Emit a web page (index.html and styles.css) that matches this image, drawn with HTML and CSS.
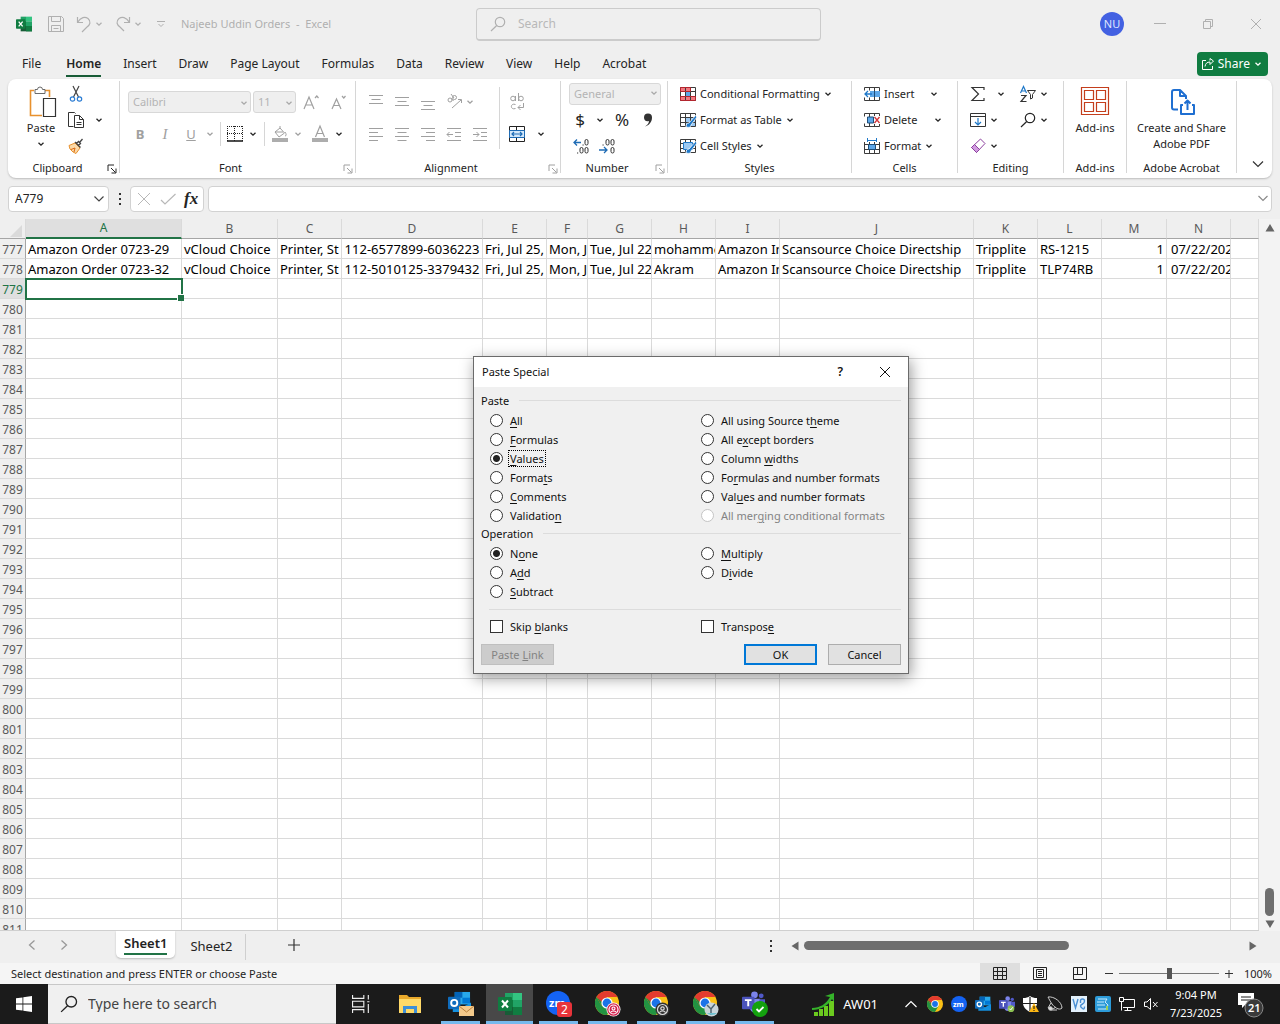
FILE: index.html
```html
<!DOCTYPE html>
<html lang="en">
<head>
<meta charset="utf-8">
<title>Najeeb Uddin Orders - Excel</title>
<link rel="stylesheet" href="styles.css">
</head>
<body>
<svg class="sprite" aria-hidden="true">
  <symbol id="chev" viewBox="0 0 8 8"><path d="M1.500 2.700 4 5.200l2.500-2.500" fill="none" stroke="currentColor" stroke-width="1.300"/></symbol>
  <symbol id="launch" viewBox="0 0 10 10"><path d="M1 7V1h6M4 4l4.500 4.500M9 4.500V9H4.500" fill="none" stroke="currentColor"/></symbol>
  <symbol id="search" viewBox="0 0 16 16"><circle cx="10" cy="6" r="4.700" fill="none" stroke="currentColor" stroke-width="1.200"/><path d="M6.700 9.500 1 15" stroke="currentColor" stroke-width="1.200"/></symbol>
  <symbol id="chrome" viewBox="0 0 24 24">
    <circle cx="12" cy="12" r="12" fill="#fbc116"/>
    <path d="M12 12 1.600 6A12 12 0 0 1 22.400 6H12z" fill="#e33b2e"/>
    <path d="M1.600 6A12 12 0 0 0 12 24l5.200-9L12 12 6.800 15z" fill="#229342"/>
    <path d="M1.600 6 6.800 15 12 12V6z" fill="#e33b2e"/><path d="M1.600 6 6.800 15 9 13z" fill="#229342"/>
    <circle cx="12" cy="12" r="5.600" fill="#fff"/><circle cx="12" cy="12" r="4.400" fill="#1a73e8"/>
  </symbol>
  <symbol id="excel" viewBox="0 0 24 24">
    <path d="M7 1h8v10H7z" fill="#21a366"/><path d="M15 1h9v7h-9z" fill="#33c481"/><path d="M7 8h8v8H7z" fill="#107c41"/><path d="M15 8h9v8h-9z" fill="#21a366"/><path d="M7 15h17v8H7z" fill="#185c37"/><path d="M15 15h9v8h-9z" fill="#107c41"/>
    <rect y="5" width="14" height="14" rx="1" fill="#107c41"/><path d="m4 8.500 6 7m0-7-6 7" stroke="#fff" stroke-width="2"/>
  </symbol>
  <symbol id="outlook" viewBox="0 0 24 24">
    <path d="M7 1h16v13H7z" fill="#28a8ea"/><path d="M7 1h8v6H7z" fill="#0364b8"/><path d="M15 7h8v6h-8z" fill="#0078d4"/><path d="M5 12l10 5 9-5v10H5z" fill="#1490df"/>
    <rect y="6" width="13" height="13" rx="1" fill="#0f6cbd"/><circle cx="6.500" cy="12.500" r="3.200" fill="none" stroke="#fff" stroke-width="2"/>
  </symbol>
  <symbol id="teams" viewBox="0 0 24 24">
    <circle cx="13" cy="4" r="3.500" fill="#7b83eb"/><circle cx="20" cy="5" r="2.500" fill="#5059c9"/><path d="M8 8h11v9a5.500 5.500 0 0 1-11 0z" fill="#7b83eb"/><path d="M18 8.500h6V15a3.500 3.500 0 0 1-6 2z" fill="#5059c9"/>
    <rect y="6" width="13" height="13" rx="1" fill="#4b53bc"/><path d="M3 9.500h7M6.500 9.500V16" stroke="#fff" stroke-width="2"/>
  </symbol>
  <symbol id="lines-l" viewBox="0 0 16 16"><path d="M1 2.500h14M1 6.500h9M1 10.500h14M1 14.500h9" stroke="currentColor"/></symbol>
  <symbol id="lines-c" viewBox="0 0 16 16"><path d="M1 2.500h14M3.500 6.500h9M1 10.500h14M3.500 14.500h9" stroke="currentColor"/></symbol>
  <symbol id="lines-r" viewBox="0 0 16 16"><path d="M1 2.500h14M6 6.500h9M1 10.500h14M6 14.500h9" stroke="currentColor"/></symbol>
  <symbol id="lines-3" viewBox="0 0 16 16"><path d="M1 3.500h14M3.500 7.500h9M1 11.500h14" stroke="currentColor"/></symbol>
  <symbol id="table" viewBox="0 0 16 16"><path d="M.5 1.500h15v13H.5zM.5 5.500h15M.5 10.500h15M5.500 1.500v13M10.500 1.500v13" fill="none" stroke="#3b3b3b"/></symbol>
</svg>

<header class="titlebar">
  <div class="quick">
    <svg class="i16" viewBox="0 0 24 24"><use href="#excel"/></svg>
    <button class="plain" aria-label="Save"><svg class="i16" viewBox="0 0 16 16" fill="none" stroke="currentColor"><path d="M.5.500h13l2 2v13H.5zM3.500.500v5h9v-5M3.500 15.500v-6h9v6M5.500 12.500h5"/></svg></button>
    <button class="plain split" aria-label="Undo"><svg class="i16" viewBox="0 0 16 16" fill="none" stroke="currentColor" stroke-width="1.200"><path d="M1.500 1v5.500H7M1.500 6.500C5 1 9 .5 12 2.500c3.500 3 2 6.500-1 8.500l-5 5"/></svg><svg class="i8"><use href="#chev"/></svg></button>
    <button class="plain split" aria-label="Redo"><svg class="i16" viewBox="0 0 16 16" fill="none" stroke="currentColor" stroke-width="1.200"><path d="M14.500 1v5.500H9M14.500 6.500C11 1 7 .5 4 2.500c-3.500 3-2 6.500 1 8.500l4 4"/></svg><svg class="i8"><use href="#chev"/></svg></button>
    <button class="plain custom" aria-label="Customize toolbar"><svg class="i10" viewBox="0 0 10 10" fill="none" stroke="currentColor"><path d="M1 2.500h8M2.500 5 5 7.500 7.500 5"/></svg></button>
    <h1>Najeeb Uddin Orders&nbsp; -&nbsp; Excel</h1>
  </div>
  <label class="searchbox"><svg class="i16"><use href="#search"/></svg><input type="text" placeholder="Search" aria-label="Search"></label>
  <div class="winctl">
    <button class="avatar">NU</button>
    <button class="plain" aria-label="Minimize"><svg class="i12" viewBox="0 0 12 12" stroke="currentColor"><path d="M0 5.500h12"/></svg></button>
    <button class="plain" aria-label="Restore"><svg class="i12" viewBox="0 0 12 12" fill="none" stroke="currentColor"><path d="M1.500 3.500h7v7h-7zM3.500 3V1.500h7v7H9"/></svg></button>
    <button class="plain" aria-label="Close"><svg class="i12" viewBox="0 0 12 12" stroke="currentColor"><path d="m1 1 10 10M11 1 1 11"/></svg></button>
  </div>
</header>

<nav class="tabs">
  <a href="#file" class="file">File</a><a href="#home" class="on">Home</a><a href="#insert">Insert</a><a href="#draw">Draw</a><a href="#layout">Page Layout</a><a href="#formulas">Formulas</a><a href="#data">Data</a><a href="#review">Review</a><a href="#view">View</a><a href="#help">Help</a><a href="#acrobat">Acrobat</a>
  <button class="share"><svg class="i12" viewBox="0 0 12 12" fill="none" stroke="currentColor"><path d="M4 2.500H.5v9h10V8M3 8.500C3.500 5.500 5 4 8 4V6.500L11.500 3 8 .5V2.500"/></svg>Share<svg class="i8"><use href="#chev"/></svg></button>
</nav>

<section class="ribbon">
  <div class="group g-clip">
    <div class="body">
      <button class="big"><svg width="28" height="32" viewBox="-2 -1 28 32" fill="none"><path d="M5 4.500H1.500v25H13M16 4.500h4.500V11" stroke="#e8912d" stroke-width="1.600"/><path d="M6 7.500v-4h2.500a2.500 2.500 0 0 1 5 0H16v4z" stroke="#6a6a6a" fill="#fff"/><path d="M14.500 12.500h12v18h-12z" stroke="#333" fill="#fff" stroke-width="1.200"/></svg>Paste<svg class="i8"><use href="#chev"/></svg></button>
      <div class="stack">
        <button class="row" aria-label="Cut"><svg class="i16" viewBox="0 0 16 16" fill="none"><path d="m5 0 5.500 11M11 0 5.500 11" stroke="#444" stroke-width="1.200"/><circle cx="4.500" cy="13" r="2.200" stroke="#2b7cd3" stroke-width="1.200"/><circle cx="11.500" cy="13" r="2.200" stroke="#2b7cd3" stroke-width="1.200"/></svg></button>
        <button class="row" aria-label="Copy"><svg class="i16" viewBox="0 0 16 16" fill="none" stroke="#333"><path d="M5.500 14.500h-5v-14h6l1 1M6.500 3.500h5l4 4v8h-9zM11.500 3.500v4h4M8.500 10.500h5M8.500 12.500h5"/></svg><svg class="i8"><use href="#chev"/></svg></button>
        <button class="row" aria-label="Format Painter"><svg class="i16" viewBox="0 0 16 16"><path d="M1 7.500 7 5l5 5-4 5.500-3-1.500-3-3z" fill="#fbd9a8" stroke="#e8912d"/><path d="M3 11.500 7 10l-1 4" fill="none" stroke="#d9660f"/><path d="m7 4 5.500 5.500M8.500 5.500l2-2 2 2-2 2zM11.500 4.500l3-3.500" stroke="#444" stroke-width="1.300" fill="#fff"/></svg></button>
      </div>
    </div>
    <footer>Clipboard<button class="launch" aria-label="Clipboard settings"><svg class="i10"><use href="#launch"/></svg></button></footer>
  </div>

  <div class="group g-font">
    <div class="body two">
      <div class="line">
        <span class="combo w-font"><select disabled aria-label="Font"><option>Calibri</option></select><svg class="i8"><use href="#chev"/></svg></span>
        <span class="combo w-size"><select disabled aria-label="Font size"><option>11</option></select><svg class="i8"><use href="#chev"/></svg></span>
        <button class="plain dim grow" aria-label="Increase font size"><svg class="i16" viewBox="0 0 16 16" fill="none" stroke="currentColor" stroke-width="1.200"><path d="M1 15 6 3l5 12M3 11h6M12 4l1.800-2L15.500 4"/></svg></button>
        <button class="plain dim grow" aria-label="Decrease font size"><svg class="i16" viewBox="0 0 16 16" fill="none" stroke="currentColor" stroke-width="1.200"><path d="m2 15 4.500-10L11 15M4 11.500h5M12 2l1.800 2L15.500 2"/></svg></button>
      </div>
      <div class="fontgrid">
        <button class="plain dim"><b>B</b></button><button class="plain dim"><i class="serif">I</i></button><button class="plain dim"><u>U</u></button><svg class="i8 dim"><use href="#chev"/></svg><span class="bar"></span>
        <button class="plain" aria-label="Borders"><svg class="i16" viewBox="0 0 16 16" stroke="#222"><path d="M.5 0v15M7.500 0v15M15.500 0v15M0 .5h16M0 7.500h16" stroke-dasharray="1 1"/><path d="M0 15h16" stroke-width="1.600"/></svg></button><svg class="i8"><use href="#chev"/></svg><span class="bar"></span>
        <button class="plain dim" aria-label="Fill color"><svg class="i16" viewBox="0 0 16 16" fill="none" stroke="currentColor"><path d="m3 6 5-4 4.500 5L7 11zM3 6h8M8 2V0M13 6c1.500 2 1.500 4 0 4"/><path d="M0 14h16" stroke="#adadad" stroke-width="4"/></svg></button><svg class="i8 dim"><use href="#chev"/></svg>
        <button class="plain dim" aria-label="Font color"><svg class="i16" viewBox="0 0 16 16" fill="none" stroke="currentColor"><path d="m3.500 11 4.500-11 4.500 11M5 7.500h6" stroke-width="1.200"/><path d="M0 14h16" stroke="#adadad" stroke-width="4"/></svg></button><svg class="i8"><use href="#chev"/></svg>
      </div>
    </div>
    <footer>Font<button class="launch dim" aria-label="Font settings"><svg class="i10"><use href="#launch"/></svg></button></footer>
  </div>

  <div class="group g-align">
    <div class="body aligngrid">
      <button class="plain dim" aria-label="Top align"><svg class="i16"><use href="#lines-3" y="-2"/></svg></button>
      <button class="plain dim" aria-label="Middle align"><svg class="i16"><use href="#lines-3"/></svg></button>
      <button class="plain dim" aria-label="Bottom align"><svg class="i16"><use href="#lines-3" y="4"/></svg></button>
      <button class="plain dim" aria-label="Orientation"><svg class="i16" viewBox="0 0 16 16" fill="none" stroke="currentColor"><circle cx="4" cy="6" r="2"/><path d="m5.500 4.500 2 2.500"/><circle cx="8.500" cy="3.500" r="2"/><path d="M5 0l3 4M6 14l9-8M12 5.500h3.500V9"/></svg></button>
      <span class="near"><svg class="i8 dim"><use href="#chev"/></svg></span>
      <span class="bar tall"></span>
      <button class="plain dim" aria-label="Wrap text"><svg class="i16" viewBox="0 0 16 16" fill="none" stroke="currentColor"><circle cx="4" cy="4.500" r="2.300"/><path d="M6.500 2v5M9.500-1v8"/><circle cx="12" cy="4.500" r="2.300"/><path d="M6.500 10.500c-5.500-2-5.500 6 0 4M14.500 9v4.500H9M11.500 11 9 13.500l2.500 2.500"/></svg></button><span></span>
      <button class="plain dim" aria-label="Align left"><svg class="i16"><use href="#lines-l"/></svg></button>
      <button class="plain dim" aria-label="Center"><svg class="i16"><use href="#lines-c"/></svg></button>
      <button class="plain dim" aria-label="Align right"><svg class="i16"><use href="#lines-r"/></svg></button>
      <button class="plain dim" aria-label="Decrease indent"><svg class="i16" viewBox="0 0 16 16" fill="none" stroke="currentColor"><path d="M1 2.500h14M9 6.500h6M9 10.500h6M1 14.500h14M7 8.500H1M3.500 6 1 8.500 3.500 11"/></svg></button>
      <button class="plain dim" aria-label="Increase indent"><svg class="i16" viewBox="0 0 16 16" fill="none" stroke="currentColor"><path d="M1 2.500h14M9 6.500h6M9 10.500h6M1 14.500h14M1 8.500h6M4.500 6 7 8.500 4.500 11"/></svg></button>
      <button class="plain" aria-label="Merge and center"><svg class="i16" viewBox="0 0 16 16" fill="none"><path d="M.5.500h15v15H.5zM7.500.500v4M7.500 11.500v4" stroke="#222"/><path d="M.5 4.500h15v7H.5z" fill="#d4e8fa" stroke="#1f6cb5"/><path d="M3 8h10M5 6 3 8l2 2M11 6l2 2-2 2" stroke="#1f6cb5" stroke-width="1.200"/></svg></button><svg class="i8"><use href="#chev"/></svg>
    </div>
    <footer>Alignment<button class="launch dim" aria-label="Alignment settings"><svg class="i10"><use href="#launch"/></svg></button></footer>
  </div>

  <div class="group g-num">
    <div class="body stack">
      <span class="combo w-num"><select disabled aria-label="Number format"><option>General</option></select><svg class="i8"><use href="#chev"/></svg></span>
      <div class="numrow"><button class="plain cur">$</button><svg class="i8"><use href="#chev"/></svg><button class="plain cur">%</button><button class="plain" aria-label="Comma style"><svg class="i16" viewBox="0 0 16 16" fill="#333"><path d="M4 5.500a4 4 0 1 1 8 0C12 10 9 13.500 5 14.500c2.500-1.500 4-3.500 4-5.500-3 1-5-1-5-3.500z"/></svg></button></div>
      <div class="numrow dec"><button class="plain" aria-label="Increase decimal"><svg class="i16" viewBox="0 0 16 16" fill="none"><path d="M1 4.500h7M4 1.500l-3 3 3 3" stroke="#1f6cb5" stroke-width="1.300"/><g stroke="#333"><rect x="12" y="1.500" width="3" height="5.500" rx="1.500"/><rect x="7" y="9.500" width="3" height="5.500" rx="1.500"/><rect x="12" y="9.500" width="3" height="5.500" rx="1.500"/><path d="M4 15h1.200M9.500 7h1.200"/></g></svg></button><button class="plain" aria-label="Decrease decimal"><svg class="i16" viewBox="0 0 16 16" fill="none"><path d="M0 12h8M5 9l3 3-3 3" stroke="#1f6cb5" stroke-width="1.300"/><g stroke="#333"><rect x="7" y="1.500" width="3" height="5.500" rx="1.500"/><rect x="12" y="1.500" width="3" height="5.500" rx="1.500"/><rect x="12" y="9.500" width="3" height="5.500" rx="1.500"/><path d="M3.500 7h1.200"/></g></svg></button></div>
    </div>
    <footer>Number<button class="launch dim" aria-label="Number settings"><svg class="i10"><use href="#launch"/></svg></button></footer>
  </div>

  <div class="group g-styles">
    <div class="body stack">
      <button class="row"><svg class="i16" viewBox="0 0 16 16"><path d="M1 2h9v4H1zM1 10h14v4H1z" fill="#f4777f"/><path d="M6 6h4v4H6z" fill="#5ea7e8"/><use href="#table"/><path d="M.5 1.500h10v4H.5zM.5 10.500h15v4H.5z" fill="none" stroke="#b3262e"/></svg>Conditional Formatting<svg class="i8"><use href="#chev"/></svg></button>
      <button class="row"><svg class="i16" viewBox="0 0 16 16"><path d="M5 6h10v8H5z" fill="#9cc9f2"/><use href="#table"/><path d="M15.500 3.500 9 11c-2 0-3 1-3 4 3 1 5 0 5-2l6-8z" fill="#1f78c8" stroke="#fff" stroke-width=".8"/></svg>Format as Table<svg class="i8"><use href="#chev"/></svg></button>
      <button class="row"><svg class="i16" viewBox="0 0 16 16"><use href="#table"/><path d="M3.500 4.500h9v7h-9z" fill="#9cc9f2" stroke="#1f78c8"/><path d="M15.500 3.500 9 11c-2 0-3 1-3 4 3 1 5 0 5-2l6-8z" fill="#1f78c8" stroke="#fff" stroke-width=".8"/></svg>Cell Styles<svg class="i8"><use href="#chev"/></svg></button>
    </div>
    <footer>Styles</footer>
  </div>

  <div class="group g-cells">
    <div class="body stack">
      <button class="row"><svg class="i16" viewBox="0 0 16 16"><use href="#table"/><path d="M6 5h10v6H6z" fill="#5ea7e8"/><path d="M0 4.500h6v7H0z" fill="#fff"/><path d="M1 8h7M4 5 1 8l3 3" fill="none" stroke="#1f78c8" stroke-width="1.300"/><path d="M10.500 5v6" stroke="#1f4e79"/></svg><span class="lbl">Insert</span><svg class="i8"><use href="#chev"/></svg></button>
      <button class="row"><svg class="i16" viewBox="0 0 16 16"><use href="#table"/><path d="M9 4h7v8H9zM0 4.500h3v7H0z" fill="#fff"/><path d="M3.500 5h6v6h-6z" fill="#5ea7e8" stroke="#1f4e79"/><path d="m10.500 5 5 6m0-6-5 6" stroke="#d13438" stroke-width="1.300"/></svg><span class="lbl wide">Delete</span><svg class="i8"><use href="#chev"/></svg></button>
      <button class="row"><svg class="i16" viewBox="0 0 16 16"><use href="#table" y="1"/><path d="M0 0h16v4H0z" fill="#fff"/><path d="M3 2.500h10M3.500 0v4M12.500 0v4" stroke="#1f78c8"/><path d="M4.500 6.500h7v5h-7z" fill="#5ea7e8" stroke="#1f4e79"/></svg>Format<svg class="i8"><use href="#chev"/></svg></button>
    </div>
    <footer>Cells</footer>
  </div>

  <div class="group g-edit">
    <div class="body editgrid">
      <button class="row wide" aria-label="AutoSum"><svg class="i16" viewBox="0 0 16 16" fill="none" stroke="#333" stroke-width="1.200"><path d="M14 4V1.500H2L8.500 8 2 14.500h12V12"/></svg><svg class="i8"><use href="#chev"/></svg></button>
      <button class="row" aria-label="Sort and filter"><svg class="i16" viewBox="0 0 16 16" fill="none"><path d="m.5 7 3-6.500 3 6.500M1.500 5h4" stroke="#1f78c8" stroke-width="1.200"/><path d="M1 9.500h5l-5 6h5.500" stroke="#333" stroke-width="1.200"/><path d="M7.500 4.500h8l-3 4v3.500L10.500 13V8.500z" stroke="#333"/></svg><svg class="i8"><use href="#chev"/></svg></button>
      <button class="row" aria-label="Fill"><svg class="i16" viewBox="0 0 16 16" fill="none"><path d="M.5 1.500h15v13H.5zM.5 4.500h15" stroke="#333"/><path d="M8 6v7M5 10l3 3 3-3" stroke="#1f78c8" stroke-width="1.200"/></svg><svg class="i8"><use href="#chev"/></svg></button>
      <button class="row" aria-label="Find"><svg class="i16"><use href="#search"/></svg><svg class="i8"><use href="#chev"/></svg></button>
      <button class="row" aria-label="Clear"><svg class="i16" viewBox="0 0 16 16"><path d="M10.500 1 15 5.500 6.500 14.500 1.500 9.500z" fill="#fff" stroke="#8c3f9e"/><path d="m4.500 6.500 5 5-3 3-5-5z" fill="#d19be0" stroke="#8c3f9e"/></svg><svg class="i8"><use href="#chev"/></svg></button>
    </div>
    <footer>Editing</footer>
  </div>

  <div class="group g-add">
    <div class="body"><button class="big"><svg width="28" height="32" viewBox="0 0 28 32" fill="none" stroke="#c43e1c" stroke-width="1.200"><path d="M.5 2.500h27v27H.5zM3.500 5.500h9v9h-9zM15.500 5.500h9v9h-9zM3.500 17.500h9v9h-9zM15.500 17.500h9v9h-9z"/></svg>Add-ins</button></div>
    <footer>Add-ins</footer>
  </div>
  <div class="group g-pdf">
    <div class="body"><button class="big"><svg width="28" height="32" viewBox="-2 0 28 32" fill="none" stroke="#1f6fd1" stroke-width="2" stroke-linejoin="round"><path d="M9 24.500H5a2 2 0 0 1-2-2V7a2 2 0 0 1 2-2h6l6 6v3M11 5v6h6M14 20h-2v9h13v-9h-2M18.500 25v-9M15.500 18.500l3-3 3 3"/></svg>Create and Share<br>Adobe PDF</button></div>
    <footer>Adobe Acrobat</footer>
  </div>
  <button class="plain collapse" aria-label="Collapse ribbon"><svg class="i12" viewBox="0 0 12 12" fill="none" stroke="#333" stroke-width="1.200"><path d="m1 3.500 5 5 5-5"/></svg></button>
</section>

<section class="formula">
  <label class="namebox"><input type="text" value="A779" aria-label="Name box"><svg class="i12" viewBox="0 0 12 12" fill="none" stroke="#444" stroke-width="1.200"><path d="m1.500 3.500 4.500 4.500 4.500-4.500"/></svg></label>
  <svg class="dots" viewBox="0 0 4 12" fill="#333"><path d="M1 0h2v2H1zM1 5h2v2H1zM1 10h2v2H1z"/></svg>
  <div class="fx">
    <button class="plain" aria-label="Cancel entry"><svg class="i16" viewBox="0 0 16 16" stroke="#b8b8b8"><path d="m2 2 12 12M14 2 2 14"/></svg></button>
    <button class="plain" aria-label="Enter"><svg class="i16" viewBox="0 0 16 16" fill="none" stroke="#b8b8b8" stroke-width="1.200"><path d="m1 9 4 4L15.500 3"/></svg></button>
    <button class="plain fn">fx</button>
  </div>
  <label class="entry"><input type="text" aria-label="Formula bar"><svg class="i12" viewBox="0 0 12 12" fill="none" stroke="#8a8a8a" stroke-width="1.200"><path d="M1.500 3 6 7.500 10.500 3"/></svg></label>
</section>

<main class="work">
  <div class="sheet">
    <table>
      <colgroup><col class="c-head"><col class="c-a"><col class="c-b"><col class="c-s"><col class="c-d"><col class="c-s"><col class="c-f"><col class="c-s"><col class="c-s"><col class="c-s"><col class="c-j"><col class="c-s"><col class="c-s"><col class="c-m"><col class="c-s"><col></colgroup>
      <thead><tr><th class="corner"><svg width="12" height="12" viewBox="0 0 12 12"><path d="M12 0v12H0z" fill="#dadada"/></svg></th><th class="sel">A</th><th>B</th><th>C</th><th>D</th><th>E</th><th>F</th><th>G</th><th>H</th><th>I</th><th>J</th><th>K</th><th>L</th><th>M</th><th>N</th><th></th></tr></thead>
      <tbody id="rows">
        <tr><th>777</th><td>Amazon Order 0723-29</td><td>vCloud Choice</td><td>Printer, St</td><td class="c">112-6577899-6036223</td><td>Fri, Jul 25,</td><td>Mon, J</td><td>Tue, Jul 22</td><td>mohamme</td><td>Amazon In</td><td>Scansource Choice Directship</td><td>Tripplite</td><td>RS-1215</td><td class="n">1</td><td class="date">07/22/202</td><td></td></tr>
        <tr><th>778</th><td>Amazon Order 0723-32</td><td>vCloud Choice</td><td>Printer, St</td><td class="c">112-5010125-3379432</td><td>Fri, Jul 25,</td><td>Mon, J</td><td>Tue, Jul 22</td><td>Akram</td><td>Amazon In</td><td>Scansource Choice Directship</td><td>Tripplite</td><td>TLP74RB</td><td class="n">1</td><td class="date">07/22/202</td><td></td></tr>
      </tbody>
    </table>
  </div>
  <div class="vscroll"><svg class="i10" viewBox="0 0 10 10"><path d="M5 1 9.500 8.500H.5z" fill="#666"/></svg><span class="thumb"></span><svg class="i10" viewBox="0 0 10 10"><path d="M5 9 .5 1.500h9z" fill="#666"/></svg></div>

  <form class="dialog" role="dialog" aria-label="Paste Special">
    <div class="dtitle"><h2>Paste Special</h2><button type="button" class="plain help">?</button><button type="button" class="plain" aria-label="Close dialog"><svg class="i12" viewBox="0 0 12 12" stroke="#111"><path d="m1 1 10 10M11 1 1 11"/></svg></button></div>
    <div class="dbody">
      <fieldset><legend>Paste</legend>
        <div class="opts six">
          <label><input type="radio" name="p"><span><u>A</u>ll</span></label>
          <label><input type="radio" name="p"><span><u>F</u>ormulas</span></label>
          <label><input type="radio" name="p" checked><span class="focus"><u>V</u>alues</span></label>
          <label><input type="radio" name="p"><span>Forma<u>t</u>s</span></label>
          <label><input type="radio" name="p"><span><u>C</u>omments</span></label>
          <label><input type="radio" name="p"><span>Validatio<u>n</u></span></label>
          <label><input type="radio" name="p"><span>All using Source t<u>h</u>eme</span></label>
          <label><input type="radio" name="p"><span>All e<u>x</u>cept borders</span></label>
          <label><input type="radio" name="p"><span>Column <u>w</u>idths</span></label>
          <label><input type="radio" name="p"><span>Fo<u>r</u>mulas and number formats</span></label>
          <label><input type="radio" name="p"><span>Val<u>u</u>es and number formats</span></label>
          <label class="off"><input type="radio" name="p" disabled><span>All mer<u>g</u>ing conditional formats</span></label>
        </div>
      </fieldset>
      <fieldset><legend>Operation</legend>
        <div class="opts three">
          <label><input type="radio" name="o" checked><span>N<u>o</u>ne</span></label>
          <label><input type="radio" name="o"><span>A<u>d</u>d</span></label>
          <label><input type="radio" name="o"><span><u>S</u>ubtract</span></label>
          <label><input type="radio" name="o"><span><u>M</u>ultiply</span></label>
          <label><input type="radio" name="o"><span>D<u>i</u>vide</span></label>
        </div>
      </fieldset>
      <div class="opts checks">
        <label><input type="checkbox"><span>Skip <u>b</u>lanks</span></label>
        <label><input type="checkbox"><span>Transpos<u>e</u></span></label>
      </div>
      <div class="dbuttons"><button type="button" disabled>Paste <u>L</u>ink</button><button type="button" class="ok">OK</button><button type="button">Cancel</button></div>
    </div>
  </form>
</main>

<section class="sheetbar">
  <button class="plain" aria-label="Previous sheet"><svg class="i12" viewBox="0 0 12 12" fill="none" stroke="#999" stroke-width="1.300"><path d="M8.500 1.500 3.500 6l5 4.500"/></svg></button>
  <button class="plain" aria-label="Next sheet"><svg class="i12" viewBox="0 0 12 12" fill="none" stroke="#999" stroke-width="1.300"><path d="m3.500 1.500 5 4.500-5 4.500"/></svg></button>
  <a href="#sheet1" class="tab on"><span>Sheet1</span></a><a href="#sheet2" class="tab">Sheet2</a>
  <button class="plain add" aria-label="New sheet"><svg class="i12" viewBox="0 0 12 12" stroke="#333" stroke-width="1.200"><path d="M6 0v12M0 6h12"/></svg></button>
  <div class="hscroll"><svg class="dots" viewBox="0 0 4 12" fill="#333"><path d="M1 0h2v2H1zM1 5h2v2H1zM1 10h2v2H1z"/></svg><svg class="i10 first" viewBox="0 0 10 10"><path d="M8.500.500v9L1.500 5z" fill="#666"/></svg><span class="track"><span class="thumb"></span></span><svg class="i10" viewBox="0 0 10 10"><path d="M1.500.500v9L8.500 5z" fill="#666"/></svg></div>
</section>

<footer class="status">
  <span>Select destination and press ENTER or choose Paste</span>
  <div class="views">
    <button class="plain on" aria-label="Normal view"><svg class="i14" viewBox="0 0 14 14" fill="none" stroke="#222"><path d="M.5.500h13v12H.5zM.5 4.500h13M.5 8.500h13M4.500.500v12M9.500.500v12"/></svg></button>
    <button class="plain" aria-label="Page layout view"><svg class="i14" viewBox="0 0 14 14" fill="none" stroke="#222"><path d="M.5.500h13v12H.5zM3.500 2.500h7v8h-7zM5 4.500h4M5 6.500h4M5 8.500h4"/></svg></button>
    <button class="plain" aria-label="Page break view"><svg class="i14" viewBox="0 0 14 14" fill="none" stroke="#222"><path d="M.5.500h13v12H.5zM.5 7.500h9v-7M4.500.500v7"/></svg></button>
  </div>
  <button class="plain zoombtn" aria-label="Zoom out"><svg class="i8" viewBox="0 0 8 8" stroke="#333"><path d="M0 3.500h8"/></svg></button>
  <input type="range" class="zoom" aria-label="Zoom" value="50">
  <button class="plain zoombtn" aria-label="Zoom in"><svg class="i8" viewBox="0 0 8 8" stroke="#333"><path d="M0 3.500h8M4 0v8"/></svg></button>
  <span class="pct">100%</span>
</footer>

<nav class="taskbar">
  <button class="start" aria-label="Start"><svg class="i16" viewBox="0 0 16 16" fill="#fff"><path d="m0 2.300 6.500-.9v6.200H0zM7.300 1.200 16 0v7.600H7.300zM0 8.400h6.500v6.200L0 13.700zM7.300 8.400H16V16l-8.700-1.200z"/></svg></button>
  <label class="tsearch"><svg class="i18" viewBox="0 0 16 16"><use href="#search"/></svg><input type="text" placeholder="Type here to search" aria-label="Type here to search"></label>
  <button class="app" aria-label="Task view"><svg class="i18" viewBox="0 0 16 16" fill="none" stroke="#eee"><path d="M.5 0v3h10V0M.5 16v-3h10v3M.5 5.500h10v5H.5zM14.500 0v4M14.500 8v8M13.500 6h2"/></svg></button>
  <button class="app files" aria-label="Explorer"><svg class="i24" viewBox="0 0 24 24"><path d="M1 3h8l2 2h12v16H1z" fill="#e9a92b"/><path d="M1 7h22v14H1z" fill="#ffd968"/><path d="M5 14h14v7h-3v-4H8v4H5z" fill="#3d8fd8"/></svg></button>
  <button class="app run" aria-label="Outlook"><svg class="i26" viewBox="0 0 26 26"><use href="#outlook" width="23" height="23"/><path d="M11 15h15v10H11z" fill="#f3c98b"/><path d="m11 15 7.500 6 7.500-6" fill="none" stroke="#b9813d"/></svg></button>
  <button class="app run active" aria-label="Excel"><svg class="i24"><use href="#excel"/></svg></button>
  <button class="app run" aria-label="Zoom"><svg class="i26" viewBox="0 0 26 26"><circle cx="12" cy="12" r="12" fill="#1463f3"/><text x="3" y="16" class="zm">zm</text><rect x="11" y="11" width="15" height="15" rx="3" fill="#e8333a"/><text x="15" y="23" class="two">2</text></svg></button>
  <button class="app run" aria-label="Chrome"><svg class="i26" viewBox="0 0 26 26"><use href="#chrome" width="24" height="24"/><circle cx="18.500" cy="18.500" r="7" fill="#fff"/><circle cx="18.500" cy="18.500" r="6.300" fill="#d21f4b"/><g fill="none" stroke="#fff" stroke-width="1.200"><circle cx="18.500" cy="18.500" r="4.500"/><circle cx="18.500" cy="17.500" r="1.500"/><path d="M15.500 21.500c1-2 5-2 6 0"/></g></svg></button>
  <button class="app run" aria-label="Chrome, second profile"><svg class="i26" viewBox="0 0 26 26"><use href="#chrome" width="24" height="24"/><circle cx="18.500" cy="18.500" r="7" fill="#333"/><g fill="none" stroke="#ddd" stroke-width="1.200"><circle cx="18.500" cy="18.500" r="5"/><circle cx="18.500" cy="17.500" r="1.700"/><path d="M15.500 21.500c1-2 5-2 6 0"/></g></svg></button>
  <button class="app run" aria-label="Chrome, third profile"><svg class="i26" viewBox="0 0 26 26"><use href="#chrome" width="24" height="24"/><circle cx="18.500" cy="18.500" r="7" fill="#c9d5da"/><path d="m14 14 4 4 4-5M18 18v6" stroke="#4e6470" stroke-width="1.500" fill="none"/><path d="M14 22a7 7 0 0 0 10 0z" fill="#6fc0cf"/></svg></button>
  <button class="app run" aria-label="Teams"><svg class="i26" viewBox="0 0 26 26"><use href="#teams" width="23" height="23"/><circle cx="18" cy="18" r="8" fill="#13a10e"/><path d="m14.500 18 2.500 2.500 4.500-4.500" fill="none" stroke="#fff" stroke-width="1.800"/></svg></button>
  <div class="tray">
    <button class="aw"><svg class="i24" viewBox="0 0 24 24"><path d="M3 20h4v4H3zM8 17h4v7H8zM13 14h4v10h-4zM18 9h5v15h-5z" fill="#6ccb1f"/><path d="M1 16C9 16 15 12 19 5l-5-1 9-3v9l-2-3C17 14 9 18 1 18z" fill="#35b32a"/></svg>AW01</button>
    <button class="t" aria-label="Show hidden icons"><svg class="i14" viewBox="0 0 14 14" fill="none" stroke="#fff" stroke-width="1.200"><path d="m1.500 10 5.500-5.500 5.500 5.500"/></svg></button>
    <button class="t" aria-label="Chrome"><svg class="i16"><use href="#chrome"/></svg></button>
    <button class="t" aria-label="Zoom"><svg class="i16" viewBox="0 0 24 24"><circle cx="12" cy="12" r="12" fill="#1463f3"/><text x="3" y="16" class="zm">zm</text></svg></button>
    <button class="t" aria-label="Outlook"><svg class="i16"><use href="#outlook"/></svg></button>
    <button class="t" aria-label="Teams"><svg class="i16" viewBox="0 0 24 24"><use href="#teams"/><circle cx="18" cy="19" r="5" fill="#8cc152"/><path d="m15.500 19 2 2 3-4" fill="none" stroke="#fff" stroke-width="1.500"/></svg></button>
    <button class="t" aria-label="Security"><svg class="i16" viewBox="0 0 16 16"><path d="M7 0c2 1.500 4 2 7 2v5c0 4-3 7-7 9-4-2-7-5-7-9V2c3 0 5-.5 7-2z" fill="#fff"/><path d="M7 1v14M0 7.500h14" stroke="#1b1b1b" stroke-width="1.200"/><path d="m11 7 5 9H6z" fill="#fdb714"/><path d="M11 10v3M11 14v1" stroke="#111"/></svg></button>
    <button class="t" aria-label="Satellite"><svg class="i16" viewBox="0 0 16 16" fill="none" stroke="#ccc"><path d="M1 1c6-1 14 5 14 11-3 3-8-1-10-4S2 3 1 1zM4 7l-3 5 5 1 3-2" /><circle cx="3.500" cy="12.500" r="1.800" fill="#ddd"/><path d="M4 14h6"/></svg></button>
    <button class="t" aria-label="VNC"><svg class="i16" viewBox="0 0 16 16" fill="none"><path d="M0 0h16v16H0z" fill="#e4f1fc"/><path d="m2 3 2.500 9L7 3M9.500 7V5q0-2 2-2t2 2-2 3-2 2 2 2.500 2-2" stroke="#4a8fd4" stroke-width="1.400"/></svg></button>
    <button class="t" aria-label="Monitor"><svg class="i16" viewBox="0 0 16 16" fill="none"><rect width="16" height="16" rx="2" fill="#2d9bd8"/><path d="M3 3h9l-2 3 3 3-2 4H3M2 6h7M2 9h8" stroke="#c9ecff"/><path d="M12 10v4" stroke="#9bd35a" stroke-width="2"/></svg></button>
    <button class="t" aria-label="Network"><svg class="i16" viewBox="0 0 16 16" fill="none" stroke="#fff"><path d="M4 3.500h11.500v8H4M8.500 11.500v3M5.500 14.500h7M.5 1.500h4v4h-4zM2.500 5.500v9"/></svg></button>
    <button class="t" aria-label="Volume muted"><svg class="i16" viewBox="0 0 16 16" fill="none" stroke="#fff"><path d="M1.500 6v4.500H4l3.500 3v-11L4 6zM10 6l4.500 5M14.500 6 10 11"/></svg></button>
    <button class="clock"><span>9:04 PM</span><span>7/23/2025</span></button>
    <button class="note" aria-label="21 notifications"><svg class="i26" viewBox="0 0 26 26"><path d="M0 2h16v12H7l-3 3v-3H0z" fill="#fff"/><path d="M3 6h10M3 9h10" stroke="#1b1b1b"/><circle cx="16" cy="17" r="9" fill="#3a3a3a" stroke="#888"/><text x="10" y="21" class="cnt">21</text></svg></button>
  </div>
</nav>
<script src="grid.js"></script>
</body>
</html>
```
FILE: styles.css
```css
* { box-sizing: border-box; }
html, body { height: 100%; }
body {
  margin: 0;
  display: flex;
  flex-direction: column;
  background: #efefef;
  color: #242424;
  font: 11px/16px "Noto Sans", "Open Sans", sans-serif;
  overflow: hidden;
}
button, input, select { font: inherit; color: inherit; }
button { background: none; border: 0; padding: 0; white-space: nowrap; }
input { border: 0; background: none; outline: 0; min-width: 0; padding: 0; }
a { color: inherit; text-decoration: none; }
svg { display: block; flex: none; overflow: visible; }
.sprite { position: absolute; width: 0; height: 0; }
.i8 { width: 8px; height: 8px; }
.i10 { width: 10px; height: 10px; }
.i12 { width: 12px; height: 12px; }
.i14 { width: 14px; height: 14px; }
.i16 { width: 16px; height: 16px; }
.i18 { width: 18px; height: 18px; }
.i24 { width: 24px; height: 24px; }
.i26 { width: 26px; height: 26px; }
.plain { display: flex; align-items: center; justify-content: center; }
.dim { color: #a0a0a0; }

/* Title bar */
.titlebar {
  flex: none;
  height: 48px;
  padding: 0 10px 0 16px;
  display: grid;
  grid-template-columns: 460px minmax(200px, 345px) 1fr;
  align-items: center;
  color: #b0b0b0;
  font-size: 12px;
}
.quick { display: flex; align-items: center; gap: 12px; }
.quick > :first-child { margin-right: 4px; }
.quick .split { gap: 3px; }
.custom { margin: 0 3px 0 2px; }
.titlebar h1 { margin: 0; font: inherit; font-size: 11px; }
.searchbox {
  height: 33px;
  display: flex;
  align-items: center;
  gap: 12px;
  padding: 0 13px;
  border: 1px solid #cbcbcb;
  border-bottom-width: 2px;
  border-radius: 4px;
}
.searchbox input::placeholder { color: #b8b8b8; }
.winctl { display: flex; justify-content: flex-end; align-items: center; }
.winctl .plain { width: 28px; margin-left: 20px; }
.avatar { width: 24px; height: 24px; border-radius: 50%; background: #4361e2; color: #dfe5ff; font-size: 11px; margin-right: 2px; }

/* Ribbon tabs */
.tabs { flex: none; height: 31px; padding: 0 12px 0 22px; display: flex; gap: 22px; font-size: 12px; line-height: 20px; align-items: center; }
.tabs a { height: 26px; padding-top: 3px; }
.tabs .file { margin-right: 3px; }
.tabs .on { font-weight: 600; border-bottom: 2px solid #185c37; }
.share { display: flex; align-items: center; gap: 4px; margin-left: auto; height: 24px; padding: 0 6px 0 5px; border-radius: 4px; background: #107c41; color: #fff; }

/* Ribbon */
.ribbon { flex: none; height: 99px; margin: 0 8px; display: flex; background: #fff; border-radius: 8px; box-shadow: 0 1px 2px #bbb; padding-top: 2px; }
.group { position: relative; display: flex; flex-direction: column; height: 92px; border-right: 1px solid #d6d6d6; flex: none; }
.body { flex: none; height: 78px; display: flex; }
.group footer { flex: none; height: 18px; line-height: 18px; text-align: center; padding-right: 14px; }
.launch { position: absolute; right: 2px; bottom: -1px; }
.g-clip { width: 112px; }
.g-font { width: 236px; }
.g-align { width: 205px; }
.g-num { width: 107px; }
.g-styles { width: 184px; }
.g-cells { width: 106px; }
.g-edit { width: 106px; }
.g-add { width: 63px; }
.g-pdf { width: 110px; }
.g-styles footer, .g-cells footer, .g-edit footer, .g-add footer, .g-pdf footer { padding: 0; }
.big { display: flex; flex-direction: column; align-items: center; padding-top: 4px; line-height: 16px; margin: 0 auto; }
.big .i8 { margin-top: 4px; }
.big > svg:first-child { margin-bottom: 3px; }
.g-clip .body { padding-left: 14px; gap: 8px; }
.g-clip .big { width: 38px; margin: 0; }
.g-clip footer { padding-right: 12px; }
.stack { display: flex; flex-direction: column; }
.row { height: 26px; display: flex; align-items: center; gap: 4px; }
.g-clip .row { gap: 11px; }
.g-styles .body, .g-cells .body { padding-left: 12px; }
.lbl { width: 42px; text-align: left; }
.lbl.wide { width: 46px; }
.two { flex-direction: column; padding: 5px 0 0 8px; }
.line { height: 32px; display: flex; align-items: center; gap: 2px; }
.grow { width: 25px; }
.combo { position: relative; display: flex; }
.combo select { appearance: none; width: 100%; height: 22px; padding: 0 4px; border: 1px solid #d8d8d8; border-radius: 3px; background: #efefef; color: #b4b4b4; opacity: 1; }
.combo svg { position: absolute; right: 3px; top: 8px; color: #a8a8a8; }
.w-font { width: 123px; }
.w-size { width: 43px; }
.w-num { width: 92px; height: 26px; margin-left: 1px; padding-top: 2px; }
.fontgrid { height: 32px; display: grid; grid-template-columns: 24px 26px 26px 12px 9px 20px 16px 7px 23px 13px 31px 8px; align-items: center; justify-items: center; font-size: 13px; }
.serif { font-family: "Liberation Serif", serif; font-size: 15px; }
.bar { width: 1px; height: 24px; background: #d6d6d6; }
.bar.tall { height: 62px; grid-row: span 2; }
.aligngrid { display: grid; padding: 5px 0 0 7px; grid-template-columns: repeat(5, 26px) 12px 24px 24px; grid-template-rows: 32px 32px; align-items: center; justify-items: center; }
.near { width: 20px; }
.near svg { margin-left: -4px; }
.g-num .body { padding-left: 7px; }
.numrow { height: 26px; display: grid; grid-template-columns: 24px 15px 30px 22px; align-items: center; justify-items: center; }
.numrow.dec { grid-template-columns: 26px 26px; }
.cur { font-size: 17px; }
.editgrid { display: grid; grid-template-columns: 50px 40px; grid-template-rows: repeat(3, 26px); padding-left: 12px; }
.editgrid .wide { gap: 11px; }
.collapse { margin: 70px 8px 0 auto; height: 26px; }

/* Formula bar */
.formula { flex: none; height: 41px; padding: 8px 8px 7px; display: flex; align-items: center; }
.namebox, .fx, .entry { height: 26px; background: #fff; border: 1px solid #d2d2d2; border-radius: 4px; display: flex; align-items: center; padding: 0 6px; }
.namebox { width: 101px; padding-right: 3px; font-size: 12px; }
.namebox input { flex: 1; }
.dots { width: 4px; height: 12px; margin: 0 8px 0 9px; }
.fx { width: 74px; gap: 8px; padding: 0 5px; }
.fn { font: italic bold 17px/20px "Liberation Serif", serif; }
.entry { flex: 1; margin-left: 4px; padding-right: 2px; }
.entry input { flex: 1; }

/* Worksheet */
.work { position: relative; flex: 1; min-height: 0; display: flex; }
.sheet { flex: 1; min-width: 0; overflow: hidden; border-bottom: 1px solid #cfcfcf; background: #fff; }
table { width: 100%; table-layout: fixed; border-collapse: separate; border-spacing: 0; }
th, td { height: 20px; padding: 0; overflow: hidden; white-space: nowrap; border: solid #dadada; border-width: 0 1px 1px 0; }
th { background: #efefef; font-weight: 400; font-size: 12px; line-height: 18px; color: #5a5a5a; }
td { font-size: 13px; line-height: 18px; color: #000; padding: 0 0 0 2px; }
td.n { text-align: right; padding-right: 2px; }
td.c { text-align: center; padding: 0; }
td.date { padding-left: 4px; }
thead th { border-bottom-color: #a6a6a6; }
thead .sel { background: #dfdfdf; color: #217346; border-bottom: 2px solid #217346; }
tbody th { border-right-color: #a6a6a6; text-align: center; line-height: 17px; padding-top: 2px; }
tbody th.sel { background: #dfdfdf; color: #217346; }
.corner svg { margin: 4px 0 0 10px; }
.c-head { width: 26px; }
.c-a { width: 156px; }
.c-b { width: 96px; }
.c-s { width: 64px; }
.c-d { width: 141px; }
.c-f { width: 41px; }
.c-j { width: 194px; }
.c-m { width: 65px; }
td.cursor { position: relative; overflow: visible; outline: 2px solid #217346; outline-offset: -1px; }
td.cursor::after { content: ""; position: absolute; right: -3px; bottom: -3px; width: 6px; height: 6px; background: #217346; border: solid #fff; border-width: 1px 0 0 1px; }
.vscroll { width: 21px; flex: none; display: flex; flex-direction: column; align-items: center; gap: 3px; padding: 4px 0 2px; background: #f3f3f3; }
.vscroll .thumb { width: 9px; height: 28px; margin-top: auto; border-radius: 5px; background: #6e6e6e; }

/* Paste Special dialog */
.dialog { position: absolute; left: 473px; top: 137px; width: 436px; background: #f0f0f0; border: 1px solid #6b6b6b; box-shadow: 2px 4px 14px #0006; color: #111; }
.dtitle { height: 30px; padding: 0 17px 0 8px; display: flex; align-items: center; background: #fff; }
.dtitle h2 { margin: 0 auto 0 0; font: inherit; }
.help { font-size: 12px; font-weight: 600; margin-right: 36px; }
.dbody { padding: 5px 7px 8px; }
fieldset { margin: 0; padding: 0; border: 0; min-width: 0; }
legend { width: 100%; height: 19px; padding: 0 0 2px; display: flex; align-items: center; gap: 10px; }
legend::after { content: ""; flex: 1; height: 1px; background: #dcdcdc; }
.opts { display: grid; grid-auto-flow: column; grid-template-columns: 211px 1fr; padding-left: 9px; }
.six { grid-template-rows: repeat(6, 19px); }
.three { grid-template-rows: repeat(3, 19px); }
.opts label { height: 19px; display: flex; align-items: center; gap: 6px; }
.opts span { padding: 0 1px; line-height: 15px; }
.opts u { text-underline-offset: 2px; }
.opts input { appearance: none; width: 13px; height: 13px; margin: 0; border: 1px solid #333; background: #fff; flex: none; }
.opts input[type="radio"] { border-radius: 50%; }
.opts input[type="radio"]:checked { background: radial-gradient(circle, #222 0 3px, #fff 4px); }
.opts .off { color: #838383; }
.opts .off input { border-color: #c4c4c4; }
.opts .focus { outline: 1px dotted #000; }
.checks { margin: 8px 0 0 8px; padding: 7px 0 0 1px; border-top: 1px solid #dcdcdc; }
.dbuttons { display: flex; gap: 11px; margin-top: 8px; }
.dbuttons button { width: 73px; height: 21px; line-height: 19px; background: #e1e1e1; border: 1px solid #adadad; }
.dbuttons button:first-child { margin-right: auto; background: #ccc; border-color: #bfbfbf; color: #838383; }
.dbuttons .ok { border: 2px solid #0078d7; line-height: 17px; }

/* Sheet tabs */
.sheetbar { flex: none; height: 32px; padding-left: 26px; display: flex; }
.sheetbar > .plain { width: 12px; margin-right: 20px; height: 28px; }
.tab { height: 26px; margin-top: 3px; padding: 0 13px; border-right: 1px solid #cfcfcf; font-size: 13px; line-height: 24px; }
.tab.on { margin: 0 2px 0 26px; padding: 4px 8px 0; height: 27px; background: #fff; border: 0; border-radius: 0 0 5px 5px; box-shadow: 0 1px 2px #bbb; color: #222; font-weight: 600; line-height: 16px; }
.tab.on span { display: block; height: 20px; border-bottom: 2px solid #217346; }
.sheetbar > .add { margin-left: 42px; }
.hscroll { width: 511px; margin-left: auto; padding: 0 22px 3px 0; display: flex; align-items: center; }
.hscroll .dots { margin: 0 17px 0 0; }
.track { flex: 1; margin: 0 2px 0 4px; }
.hscroll .thumb { display: block; width: 60%; height: 9px; border-radius: 5px; background: #6e6e6e; }

/* Status bar */
.status { flex: none; height: 21px; display: flex; align-items: center; padding: 0 8px 0 11px; background: #f5f5f5; }
.views { margin-left: auto; display: flex; }
.views .plain { width: 40px; height: 21px; }
.views .on { background: #dedede; }
.zoombtn { width: 18px; }
.zoom { appearance: none; width: 100px; height: 16px; margin: 0 1px; background: linear-gradient(#777, #777) center / 100% 1px no-repeat; }
.zoom::-webkit-slider-thumb { appearance: none; width: 5px; height: 11px; background: #555; }
.pct { width: 34px; text-align: right; }

/* Taskbar */
.taskbar { flex: none; height: 40px; display: flex; background: #1b1b1b; color: #fff; }
.start { width: 48px; display: flex; align-items: center; justify-content: center; }
.tsearch { width: 288px; display: flex; align-items: center; gap: 10px; padding-left: 12px; background: #f0f0f0; color: #222; border: 1px solid #c8c8c8; border-width: 1px 0; font-size: 14px; }
.tsearch input { flex: 1; }
.tsearch input::placeholder { color: #444; }
.app { width: 49px; display: flex; align-items: center; justify-content: center; border: solid transparent; border-width: 0 5px; background-clip: padding-box; }
.app.files { margin-right: 2px; }
.run { background-image: linear-gradient(#76b9ed, #76b9ed); background-size: 100% 3px; background-position: bottom; background-repeat: no-repeat; }
.app.active { background-color: #484848; border-width: 0 1px; }
.tray { margin-left: auto; display: flex; align-items: center; padding-right: 3px; }
.aw { display: flex; align-items: center; gap: 8px; font-size: 13px; margin-right: 21px; }
.t { width: 24px; display: flex; justify-content: center; }
.clock { width: 66px; display: flex; flex-direction: column; align-items: center; line-height: 18px; }
.note { width: 44px; display: flex; justify-content: center; margin-right: 4px; }
.zm { font-size: 11px; font-weight: 700; fill: #fff; }
text.two { font-size: 12px; fill: #fff; }
.cnt { font-size: 11px; font-weight: 600; fill: #fff; }
```
FILE: grid.js
```js
// Fill the rest of the worksheet with empty, numbered rows.
const body = document.getElementById("rows");
for (let n = 779; n <= 811; n++) {
  const tr = document.createElement("tr");
  const th = document.createElement("th");
  th.textContent = n;
  tr.append(th);
  for (let c = 0; c < 15; c++) tr.append(document.createElement("td"));
  if (n === 779) {
    th.className = "sel";
    tr.children[1].className = "cursor";
  }
  body.append(tr);
}
```
